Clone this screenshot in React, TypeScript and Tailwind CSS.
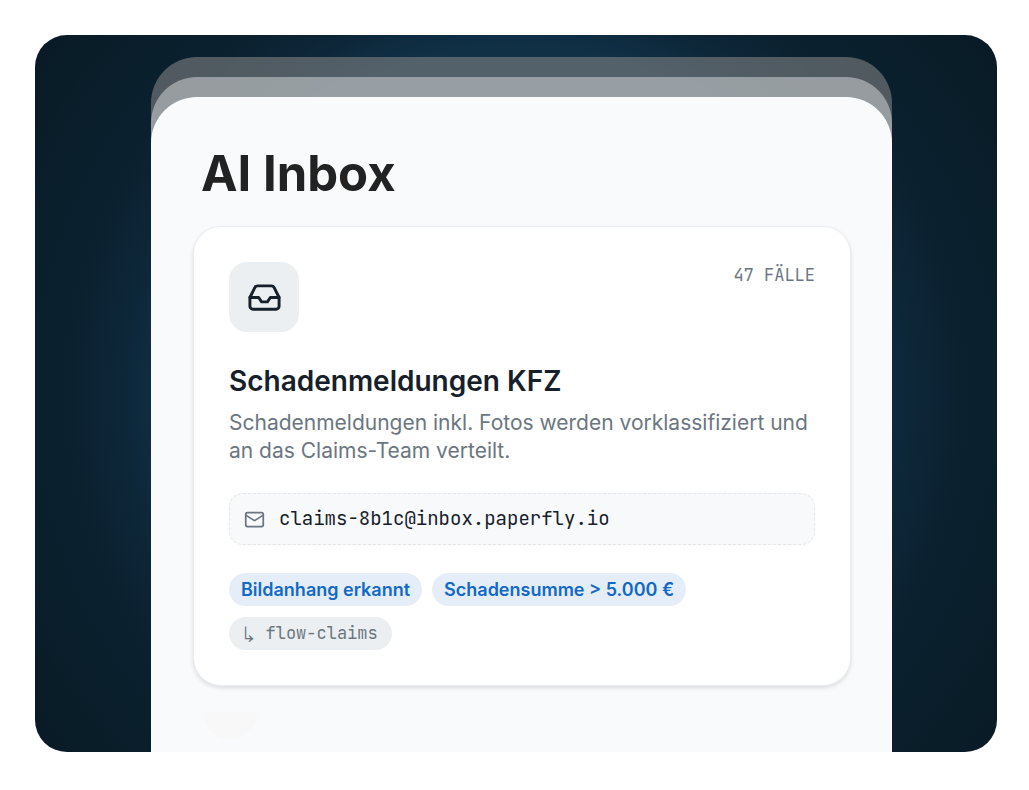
import { Inbox, Mail } from "lucide-react";

export default function App() {
  return (
    <main className="min-h-screen bg-white pt-[35px] pr-8 pb-[38px] pl-[35px] font-['Inter',sans-serif]">
      <section className="overflow-hidden rounded-[32px] bg-[radial-gradient(circle_at_center,#153850_0%,#103046_58%,#0d2638_66%,#0b2130_74%,#0a1f2c_82%,#081a26_100%)] pt-[22px] pr-[105px] pl-[116px]">
        <div className="rounded-t-[46px] bg-[#888887]/56 pt-5">
          <div className="rounded-t-[46px] bg-[#dcdddd]/50 pt-5">
            <div className="rounded-t-[46px] bg-[#f9fafc] pt-12 pr-[41px] pl-[42px]">
              <h1 className="px-2 text-[49px] leading-[58px] font-bold text-[#222222]">AI Inbox</h1>

              <article className="mt-[23px] rounded-[28px] border border-[#ebedef] bg-white p-[35px] shadow-[0_2px_4px_rgba(0,0,0,0.12)]">
                <header className="flex items-start justify-between">
                  <div className="flex size-[70px] items-center justify-center rounded-[18px] bg-[#ebeff2] text-[#16202a]">
                    <Inbox size={35} strokeWidth={2} aria-hidden="true" />
                  </div>
                  <span className="font-['JetBrains_Mono',monospace] text-[17px] leading-[26px] text-[#6b7680]">
                    47 FÄLLE
                  </span>
                </header>

                <h2 className="mt-8 text-[28px] leading-[34px] font-semibold text-[#16202a]">Schadenmeldungen KFZ</h2>
                <p className="mt-[11px] text-[21px] leading-7 text-[#6b7680]">
                  Schadenmeldungen inkl. Fotos werden vorklassifiziert und an das Claims-Team verteilt.
                </p>

                <div className="mt-7 flex h-[52px] items-center gap-[14px] rounded-[14px] border border-dashed border-[#e3e6e9] bg-[#f8f9fb] px-[14px]">
                  <Mail size={21} strokeWidth={2} className="text-[#6b7680]" aria-hidden="true" />
                  <span className="font-['JetBrains_Mono',monospace] text-[19px] leading-6 text-[#16202a]">
                    claims-8b1c@inbox.paperfly.io
                  </span>
                </div>

                <ul className="mt-7 flex flex-wrap gap-x-[10px] gap-y-[11px]">
                  <li className="rounded-full bg-[#e5eef8] px-3 py-1 text-[18px] leading-[25px] font-semibold text-[#1269c7]">
                    Bildanhang erkannt
                  </li>
                  <li className="rounded-full bg-[#e5eef8] px-3 py-1 text-[18px] leading-[25px] font-semibold text-[#1269c7]">
                    Schadensumme &gt; 5.000 €
                  </li>
                  <li className="rounded-full bg-[#ebeff2] px-[14px] py-1 font-['JetBrains_Mono',monospace] text-[17px] leading-[25px] text-[#6b7680]">
                    <span className="font-['Noto_Sans_Math','Noto_Sans_Symbols','Noto_Sans_CJK_JP',monospace]">↳</span> flow-claims
                  </li>
                </ul>
              </article>

              <div className="mt-[26px] h-10 overflow-hidden pl-[10px]">
                <div className="h-[27px] w-[55px] rounded-b-full bg-[#f8f8f8]" />
              </div>
            </div>
          </div>
        </div>
      </section>
    </main>
  );
}
